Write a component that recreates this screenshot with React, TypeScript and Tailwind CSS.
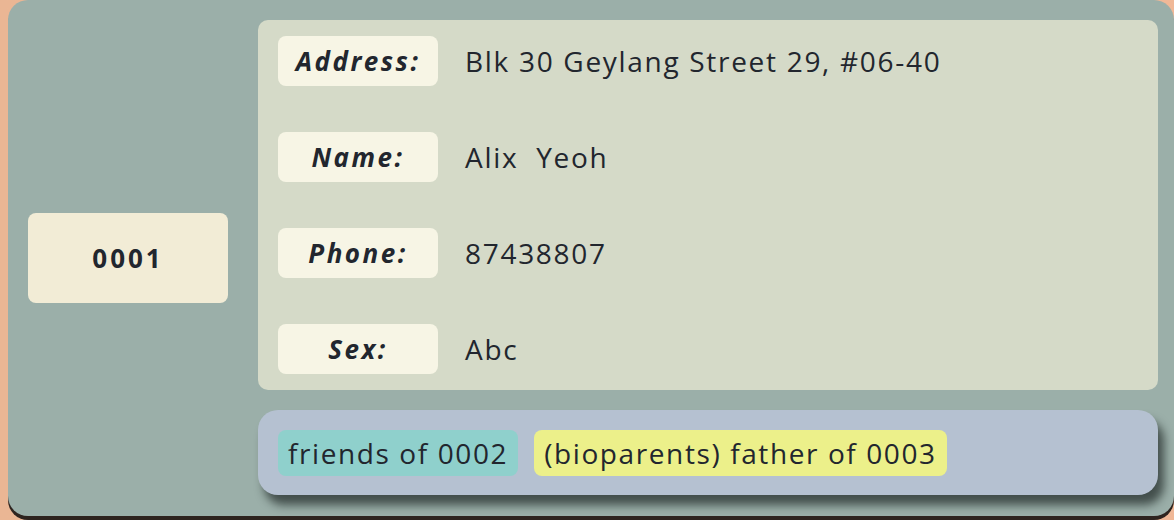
const font = { fontFamily: '"Open Sans", "DejaVu Sans", sans-serif' };

const fields = [
  { label: "Address:", value: "Blk 30 Geylang Street 29, #06-40" },
  { label: "Name:", value: "Alix  Yeoh" },
  { label: "Phone:", value: "87438807" },
  { label: "Sex:", value: "Abc" },
];

const relations = [
  { text: "friends of 0002", className: "bg-[#8fd0cc]" },
  { text: "(bioparents) father of 0003", className: "bg-[#ecf08a]" },
];

export default function App() {
  return (
    <div className="h-[520px] w-[1174px] overflow-hidden bg-gradient-to-r from-[#eab694] to-[#f0b897] text-[#22262e]" style={font}>
      <div className="ml-2 flex h-[516px] w-[1166px] items-stretch gap-[30px] rounded-[20px] bg-[#9bafa9] py-5 pl-5 pr-4 shadow-[0_4px_0_#2e241f]">
        <div className="flex w-[200px] items-center">
          <div className="flex h-[90px] w-full items-center justify-center rounded-lg bg-[#f2ecd6] text-[26px] font-bold tracking-[3px]">0001</div>
        </div>
        <div className="flex flex-1 flex-col gap-5">
          <div className="flex flex-col gap-[46px] rounded-[10px] bg-[#d5dac8] px-5 py-4">
            {fields.map((f) => (
              <div key={f.label} className="flex h-[50px] items-center gap-[27px]">
                <div className="flex h-[50px] w-[160px] items-center justify-center rounded-lg bg-[#f7f5e5] text-[26px] font-bold italic tracking-[2.5px]">{f.label}</div>
                <span className="whitespace-pre text-[28px] tracking-[1.7px]">{f.value}</span>
              </div>
            ))}
          </div>
          <div className="flex h-[85px] items-center gap-4 rounded-[20px] bg-[#b5c1d1] px-5 shadow-[6px_10px_10px_rgba(20,28,26,0.65)]">
            {relations.map((r) => (
              <span key={r.text} className={`flex h-[46px] items-center rounded-lg px-[10px] text-[28px] tracking-[1.6px] ${r.className}`}>{r.text}</span>
            ))}
          </div>
        </div>
      </div>
    </div>
  );
}
